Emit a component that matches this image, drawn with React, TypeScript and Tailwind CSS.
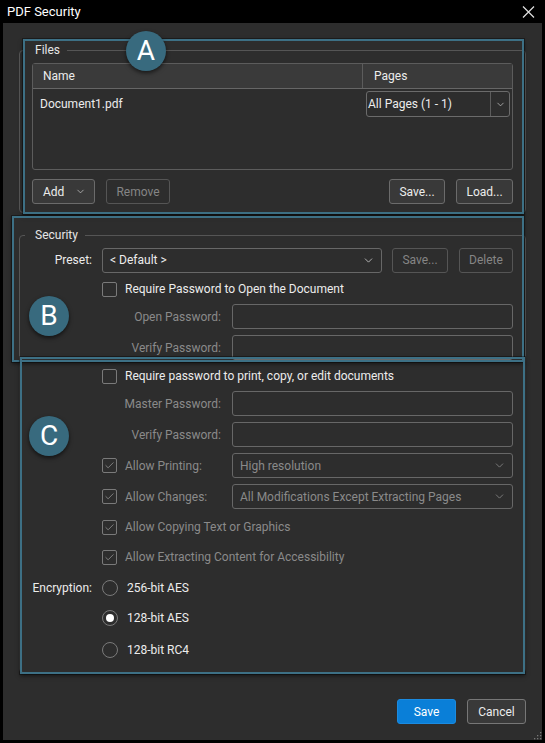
import { ChevronDown, Check } from 'lucide-react';

const font = { fontFamily: 'Roboto, "Noto Sans", sans-serif' };

const Checkbox = ({ checked = false }: { checked?: boolean }) => (
  <span className="flex h-[15px] w-[15px] shrink-0 items-center justify-center rounded-[2px] border border-[#7a7a7a]">
    {checked && <Check size={11} strokeWidth={1.6} className="text-[#9a9a9a]" />}
  </span>
);

const Radio = ({ checked = false }: { checked?: boolean }) => (
  <span className="flex h-[16px] w-[16px] shrink-0 items-center justify-center rounded-full border border-[#7a7a7a]">
    {checked && <span className="h-[8px] w-[8px] rounded-full bg-white" />}
  </span>
);

const Btn = ({ label, disabled = false, className = '' }: { label: string; disabled?: boolean; className?: string }) => (
  <button
    className={`flex h-[25px] items-center justify-center rounded-[3px] border text-[12px] ${
      disabled ? 'border-[#555] bg-[#2d2d2d] text-[#858585]' : 'border-[#6b6b6b] bg-[#393939] text-[#ececec]'
    } ${className}`}
  >
    {label}
  </button>
);

const Input = () => <div className="h-[25px] flex-1 rounded-[3px] border border-[#676767] bg-[#2d2d2d]" />;

const Select = ({ value, disabled = false }: { value: string; disabled?: boolean }) => (
  <div className="flex h-[25px] flex-1 items-center justify-between rounded-[3px] border border-[#676767] bg-[#2d2d2d] pl-[7px] pr-[6px]">
    <span className={`text-[12px] ${disabled ? 'text-[#8a8a8a]' : 'text-[#ececec]'}`}>{value}</span>
    <ChevronDown size={13} strokeWidth={1.5} className={disabled ? 'text-[#8a8a8a]' : 'text-[#cfcfcf]'} />
  </div>
);

const Badge = ({ letter, className }: { letter: string; className: string }) => (
  <div
    className={`absolute flex h-[40px] w-[40px] items-center justify-center rounded-full bg-[#386a7e] text-[28px] leading-none text-white shadow-[0_2px_4px_rgba(0,0,0,0.6)] ${className}`}
  >
    {letter}
  </div>
);

export default function App() {
  return (
    <div className="relative h-[743px] w-[545px] overflow-hidden bg-black text-[12px] text-[#ececec]" style={font}>
      {/* Title bar */}
      <div className="flex h-[23px] items-center justify-between pl-[7px] pr-[10px]">
        <span className="text-[13px] text-white">PDF Security</span>
        <svg width="13" height="12" viewBox="0 0 13 12" className="text-[#e0e0e0]">
          <path d="M1 0.5 L12 11.5 M12 0.5 L1 11.5" stroke="currentColor" strokeWidth="1.2" fill="none" />
        </svg>
      </div>

      {/* Body */}
      <div className="mx-[3px] flex h-[717px] flex-col bg-[#2d2d2d] px-4 pt-[19px]">
        {/* Files */}
        <fieldset className="rounded-[4px] border border-[#555] px-0 pb-[8px] pt-[5px]">
          <legend className="ml-[3px] pl-[12px] pr-[7px] text-[12px] leading-[16px] text-[#e6e6e6]">Files</legend>
          <div className="px-3">
            <div className="h-[107px] rounded-[3px] border border-[#5c5c5c]">
              <div className="grid h-[25px] grid-cols-[1fr_150px] border-b border-[#666] bg-[#3a3a3a]">
                <span className="flex items-center pl-[10px] text-[12px]">Name</span>
                <span className="flex items-center border-l border-[#5c5c5c] pl-[11px] text-[12px]">Pages</span>
              </div>
              <div className="flex items-center justify-between pl-[7px] pr-[2px] pt-[2px]">
                <span className="text-[12px]">Document1.pdf</span>
                <div className="flex h-[26px] w-[144px] items-center rounded-[3px] border border-[#6b6b6b] bg-[#2d2d2d]">
                  <span className="flex-1 pl-[1px] text-[12px]">All Pages (1 - 1)</span>
                  <span className="flex h-full w-[19px] items-center justify-center border-l border-[#5c5c5c]">
                    <ChevronDown size={11} strokeWidth={1.5} className="text-[#cfcfcf]" />
                  </span>
                </div>
              </div>
            </div>
            <div className="mt-[9px] flex gap-[11px]">
              <button className="flex h-[25px] w-[63px] items-center justify-between rounded-[3px] border border-[#6b6b6b] bg-[#393939] pl-[10px] pr-[8px] text-[12px] text-[#ececec]">
                Add
                <ChevronDown size={11} strokeWidth={1.5} className="text-[#cfcfcf]" />
              </button>
              <Btn label="Remove" disabled className="w-[64px]" />
              <div className="flex-1" />
              <Btn label="Save..." className="w-[56px]" />
              <Btn label="Load..." className="w-[57px]" />
            </div>
          </div>
        </fieldset>

        {/* Security */}
        <fieldset className="mt-[14px] rounded-[4px] border border-[#555] px-0 pb-[14px] pt-[5px]">
          <legend className="ml-[5px] pl-[10px] pr-[7px] text-[12px] leading-[16px] text-[#e6e6e6]">Security</legend>
          <div className="flex flex-col px-3">
            <div className="flex h-[24px] items-center">
              <span className="w-[60px] text-right">Preset:</span>
              <div className="ml-[10px] flex flex-1">
                <Select value="< Default >" />
              </div>
              <Btn label="Save..." disabled className="ml-[10px] w-[56px]" />
              <Btn label="Delete" disabled className="ml-[11px] w-[54px]" />
            </div>

            <div className="mt-[9px] flex h-[16px] items-center gap-[8px] pl-[70px]">
              <Checkbox />
              <span>Require Password to Open the Document</span>
            </div>
            <div className="mt-[7px] flex items-center">
              <span className="w-[189px] text-right text-[#8a8a8a]">Open Password:</span>
              <div className="ml-[11px] flex flex-1"><Input /></div>
            </div>
            <div className="mt-[6px] flex items-center">
              <span className="w-[189px] text-right text-[#8a8a8a]">Verify Password:</span>
              <div className="ml-[11px] flex flex-1"><Input /></div>
            </div>

            <div className="mt-[8px] flex h-[16px] items-center gap-[8px] pl-[70px]">
              <Checkbox />
              <span>Require password to print, copy, or edit documents</span>
            </div>
            <div className="mt-[7px] flex items-center">
              <span className="w-[189px] text-right text-[#8a8a8a]">Master Password:</span>
              <div className="ml-[11px] flex flex-1"><Input /></div>
            </div>
            <div className="mt-[6px] flex items-center">
              <span className="w-[189px] text-right text-[#8a8a8a]">Verify Password:</span>
              <div className="ml-[11px] flex flex-1"><Input /></div>
            </div>
            <div className="mt-[6px] flex items-center pl-[70px]">
              <div className="flex w-[130px] items-center gap-[8px] text-[#8a8a8a]">
                <Checkbox checked />
                <span>Allow Printing:</span>
              </div>
              <Select value="High resolution" disabled />
            </div>
            <div className="mt-[6px] flex items-center pl-[70px]">
              <div className="flex w-[130px] items-center gap-[8px] text-[#8a8a8a]">
                <Checkbox checked />
                <span>Allow Changes:</span>
              </div>
              <Select value="All Modifications Except Extracting Pages" disabled />
            </div>
            <div className="mt-[10px] flex h-[16px] items-center gap-[8px] pl-[70px] text-[#8a8a8a]">
              <Checkbox checked />
              <span>Allow Copying Text or Graphics</span>
            </div>
            <div className="mt-[14px] flex h-[16px] items-center gap-[8px] pl-[70px] text-[#8a8a8a]">
              <Checkbox checked />
              <span>Allow Extracting Content for Accessibility</span>
            </div>

            <div className="mt-[15px] flex h-[16px] items-center">
              <span className="w-[60px] text-right">Encryption:</span>
              <div className="ml-[10px] flex items-center gap-[9px]">
                <Radio />
                <span>256-bit AES</span>
              </div>
            </div>
            <div className="mt-[14px] flex h-[16px] items-center gap-[9px] pl-[70px]">
              <Radio checked />
              <span>128-bit AES</span>
            </div>
            <div className="mt-[16px] flex h-[16px] items-center gap-[9px] pl-[70px]">
              <Radio />
              <span>128-bit RC4</span>
            </div>
          </div>
        </fieldset>

        {/* Footer */}
        <div className="mt-[26px] flex justify-end gap-[11px]">
          <button className="h-[25px] w-[59px] rounded-[3px] border border-[#1b8be0] bg-[#0a7fd8] text-[12px] text-white">Save</button>
          <Btn label="Cancel" className="w-[59px] border-[#777] bg-[#3b3b3b]" />
        </div>
      </div>

      {/* Resize grip */}
      <svg width="8" height="8" viewBox="0 0 8 8" className="absolute bottom-[3px] right-[3px] text-[#777]">
        <rect x="6" y="0" width="1.3" height="1.3" fill="currentColor" />
        <rect x="3" y="3" width="1.3" height="1.3" fill="currentColor" />
        <rect x="6" y="3" width="1.3" height="1.3" fill="currentColor" />
        <rect x="0" y="6" width="1.3" height="1.3" fill="currentColor" />
        <rect x="3" y="6" width="1.3" height="1.3" fill="currentColor" />
        <rect x="6" y="6" width="1.3" height="1.3" fill="currentColor" />
      </svg>

      {/* Annotation callouts */}
      <div className="pointer-events-none absolute left-[23px] top-[39px] h-[175px] w-[501px] border-2 border-[#3d7085] shadow-[0_0_0_1px_rgba(0,0,0,0.35),0_2px_4px_rgba(0,0,0,0.5)]" />
      <div className="pointer-events-none absolute left-[12px] top-[216px] h-[146px] w-[512px] border-2 border-[#3d7085] shadow-[0_0_0_1px_rgba(0,0,0,0.35),0_2px_4px_rgba(0,0,0,0.5)]" />
      <div className="pointer-events-none absolute left-[20px] top-[357px] h-[317px] w-[505px] border-2 border-[#3d7085] shadow-[0_0_0_1px_rgba(0,0,0,0.35),0_2px_4px_rgba(0,0,0,0.5)]" />
      <Badge letter="A" className="left-[126px] top-[31px]" />
      <Badge letter="B" className="left-[29px] top-[296px]" />
      <Badge letter="C" className="left-[29px] top-[416px]" />
    </div>
  );
}
